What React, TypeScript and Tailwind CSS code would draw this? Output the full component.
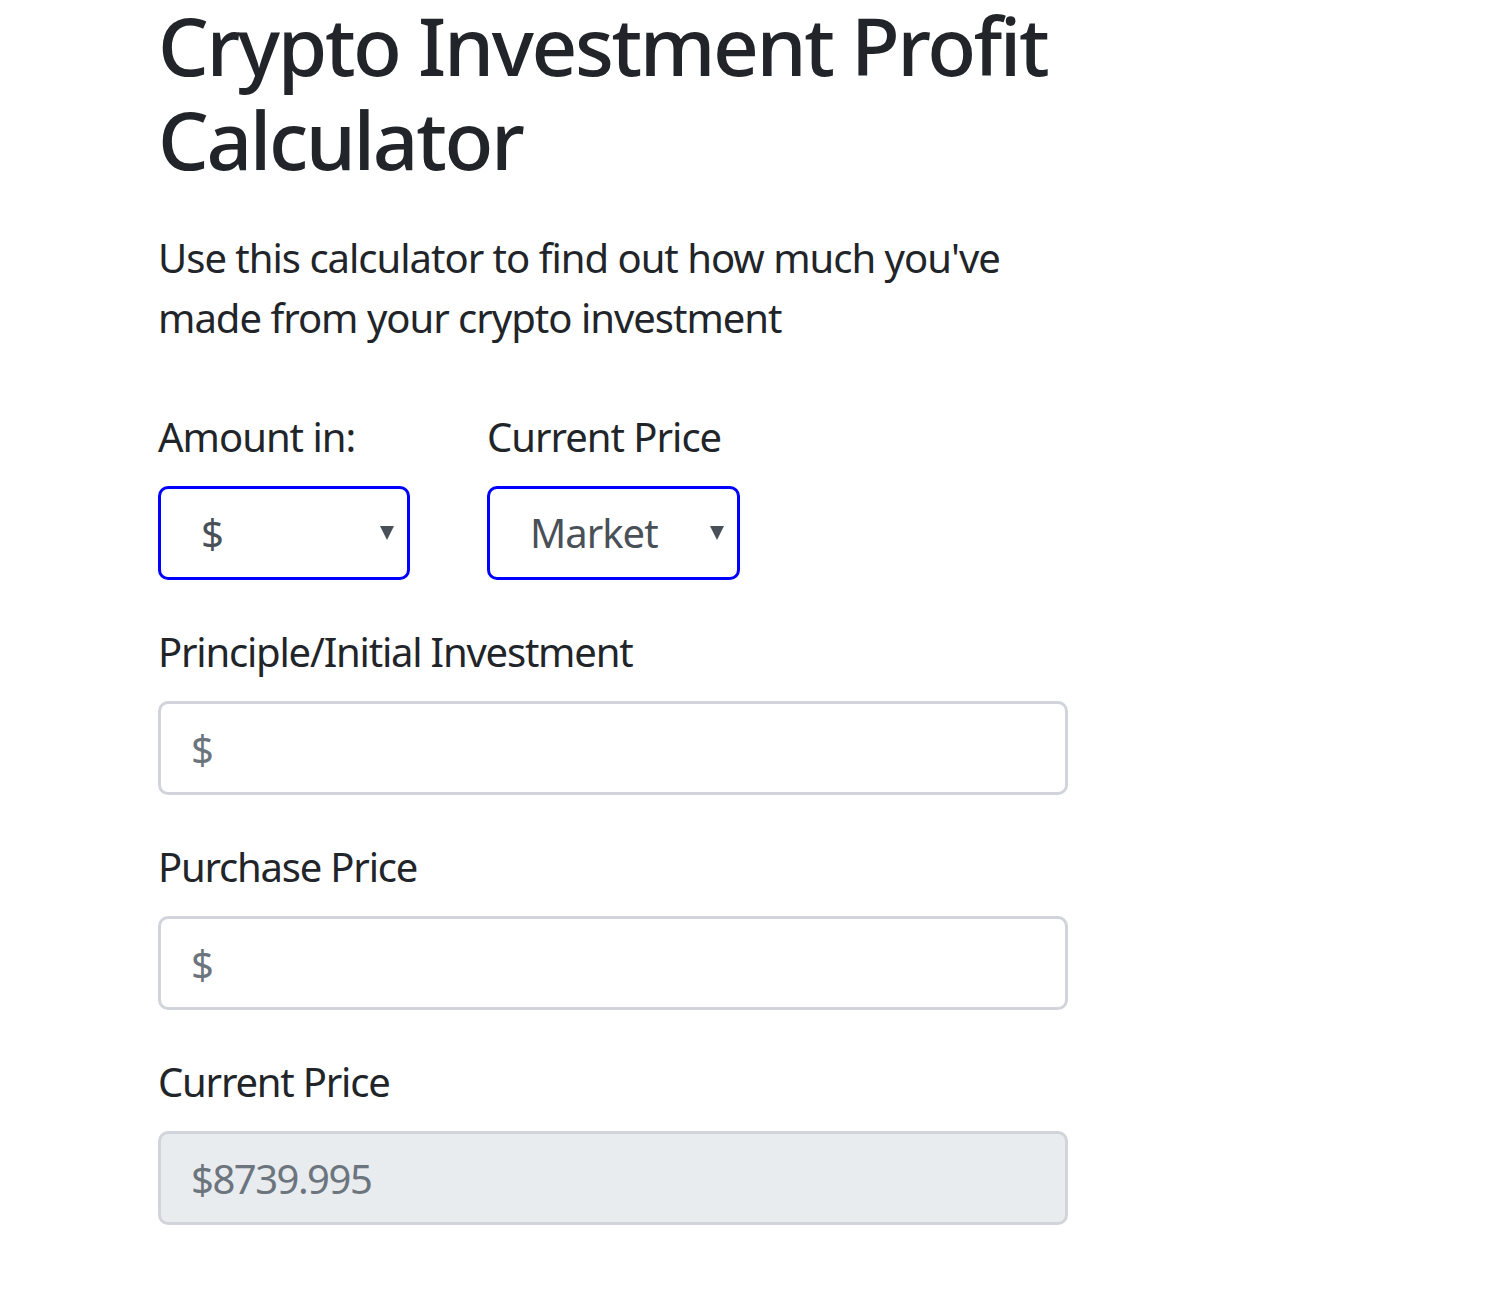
import React from "react";

const font = { fontFamily: '"Noto Sans", "Open Sans", sans-serif' };

function Field({ label, placeholder, value, disabled }: { label: string; placeholder?: string; value?: string; disabled?: boolean }) {
  return (
    <div className="mb-[42px]">
      <label className="block text-[40px] leading-[60px] tracking-[-1.2px] text-[#212529] mb-[19px]">{label}</label>
      <input
        className={`block w-[910px] h-[94px] px-[30px] text-[40px] tracking-[-1.5px] rounded-[10px] border-[3px] border-[#d1d5db] outline-none ${disabled ? "bg-[#e9ecef] text-[#6c757d]" : "bg-white text-[#495057]"} placeholder:text-[#6c757d]`}
        placeholder={placeholder}
        defaultValue={value}
        disabled={disabled}
        style={font}
      />
    </div>
  );
}

function Select({ value, w }: { value: string; w: string }) {
  return (
    <div className={`relative ${w} h-[94px] rounded-[10px] border-[3px] border-[#0000ff] bg-white flex items-center pl-[40px]`}>
      <span className="text-[40px] tracking-[-1px] text-[#495057]">{value}</span>
      <svg className="absolute right-[13px] top-[37px]" width="14" height="14" viewBox="0 0 14 14">
        <polygon points="0,0 14,0 7,14" fill="#495057" />
      </svg>
    </div>
  );
}

export default function App() {
  return (
    <div className="min-h-screen bg-white" style={font}>
      <div className="pl-[158px] pt-0">
        <h1 className="text-[80px] leading-[94px] font-medium tracking-[-2.4px] text-[#212529] w-[1000px] whitespace-nowrap -mt-[2px]">
          Crypto Investment Profit
          <br />
          Calculator
        </h1>
        <p className="mt-[42px] text-[40px] leading-[60px] tracking-[-1px] text-[#212529] w-[900px]">
          Use this calculator to find out how much you've
          <br />
          made from your crypto investment
        </p>
        <div className="mt-[59px] flex gap-[77px] mb-[42px]">
          <div>
            <div className="text-[40px] leading-[60px] tracking-[-1px] text-[#212529] mb-[19px]">Amount in:</div>
            <Select value="$" w="w-[252px]" />
          </div>
          <div>
            <div className="text-[40px] leading-[60px] tracking-[-1px] text-[#212529] mb-[19px]">Current Price</div>
            <Select value="Market" w="w-[253px]" />
          </div>
        </div>
        <Field label="Principle/Initial Investment" placeholder="$" />
        <Field label="Purchase Price" placeholder="$" />
        <Field label="Current Price" value="$8739.995" disabled />
      </div>
    </div>
  );
}
